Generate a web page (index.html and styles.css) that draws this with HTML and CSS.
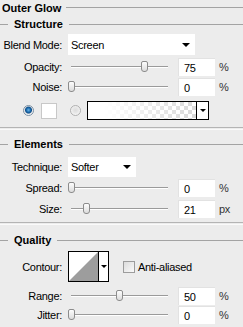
FILE: index.html
```html
<!DOCTYPE html>
<html lang="en">
  <head>
    <link rel="stylesheet" href="styles.css">
    <title>Outer Glow</title>
  </head>
  <body>
    <div class="panel">
      <div class="head head-top"><span class="head-text">Outer Glow</span><span class="head-line"></span></div>
      <div class="head head-structure"><span class="head-lead"></span><span class="head-text">Structure</span><span class="head-line"></span></div>

      <div class="row row-blend">
        <span class="label">Blend Mode:</span>
        <div class="select select-blend"><span>Screen</span><span class="arrow"></span></div>
      </div>

      <div class="row row-opacity">
        <span class="label">Opacity:</span>
        <div class="slider"><span class="track"></span><span class="thumb" style="left: 73px"></span></div>
        <div class="field">75</div>
        <span class="unit">%</span>
      </div>

      <div class="row row-noise">
        <span class="label">Noise:</span>
        <div class="slider"><span class="track"></span><span class="thumb" style="left: 0px"></span></div>
        <div class="field">0</div>
        <span class="unit">%</span>
      </div>

      <div class="row row-color">
        <span class="radio radio-on"></span>
        <span class="swatch"></span>
        <span class="radio radio-off"></span>
        <div class="gradient"><span class="gradient-fill"></span><span class="gradient-drop"><span class="arrow arrow-small"></span></span></div>
      </div>

      <div class="sep sep-one"></div>

      <div class="head head-elements"><span class="head-lead"></span><span class="head-text">Elements</span><span class="head-line"></span></div>

      <div class="row row-technique">
        <span class="label">Technique:</span>
        <div class="select select-technique"><span>Softer</span><span class="arrow"></span></div>
      </div>

      <div class="row row-spread">
        <span class="label">Spread:</span>
        <div class="slider"><span class="track"></span><span class="thumb" style="left: 0px"></span></div>
        <div class="field">0</div>
        <span class="unit">%</span>
      </div>

      <div class="row row-size">
        <span class="label">Size:</span>
        <div class="slider"><span class="track"></span><span class="thumb" style="left: 15px"></span></div>
        <div class="field">21</div>
        <span class="unit">px</span>
      </div>

      <div class="sep sep-two"></div>

      <div class="head head-quality"><span class="head-lead"></span><span class="head-text">Quality</span><span class="head-line"></span></div>

      <div class="row row-contour">
        <span class="label">Contour:</span>
        <div class="contour">
          <svg class="contour-curve" width="29" height="29" viewBox="0 0 29 29">
            <polygon points="0,29 29,0 29,29" fill="#9d9d9d" />
          </svg>
          <span class="contour-drop"><span class="arrow arrow-small"></span></span>
        </div>
        <span class="checkbox"></span>
        <span class="check-label">Anti-aliased</span>
      </div>

      <div class="row row-range">
        <span class="label">Range:</span>
        <div class="slider"><span class="track"></span><span class="thumb" style="left: 48px"></span></div>
        <div class="field">50</div>
        <span class="unit">%</span>
      </div>

      <div class="row row-jitter">
        <span class="label">Jitter:</span>
        <div class="slider"><span class="track"></span><span class="thumb" style="left: 0px"></span></div>
        <div class="field">0</div>
        <span class="unit">%</span>
      </div>
    </div>
  </body>
</html>
```

FILE: styles.css
```css
body {
  margin: 0;
  background-color: #ececec;
  font-family: "Liberation Sans", Arial, sans-serif;
  font-size: 11px;
  letter-spacing: -0.3px;
  color: #000;
}
.panel {
  width: 243px;
  height: 327px;
  display: flex;
  flex-direction: column;
}

/* section headings */
.head {
  display: flex;
  align-items: center;
  height: 14px;
  font-weight: bold;
  letter-spacing: 0;
}
.head-top {
  height: 15px;
  padding-left: 2px;
}
.head-lead {
  width: 8px;
  height: 1px;
  background-color: #a3a3a3;
  margin-right: 6px;
}
.head-line {
  flex: 1;
  height: 1px;
  background-color: #a3a3a3;
  margin-left: 6px;
}
.head-top .head-line {
  margin-left: 5px;
}
.head-structure {
  margin-top: 2px;
}
.head-elements {
  margin-top: 7px;
}
.head-quality {
  margin-top: 8px;
}
.sep {
  height: 1px;
  border-top: 1px solid #b4b4b4;
  border-bottom: 1px solid #fafafa;
}
.sep-one {
  margin-top: 7px;
}
.sep-two {
  margin-top: 4px;
}

/* rows */
.row {
  display: flex;
  align-items: center;
  height: 18px;
}
.label {
  width: 62px;
  text-align: right;
  margin-right: 6px;
  white-space: nowrap;
}
.row-blend {
  height: 21px;
  margin-top: 3px;
}
.row-opacity {
  margin-top: 3px;
}
.row-noise {
  margin-top: 2px;
}
.row-color {
  height: 19px;
  margin-top: 5px;
  padding-left: 23px;
}
.row-technique {
  height: 20px;
  margin-top: 6px;
}
.row-spread {
  margin-top: 2px;
}
.row-size {
  margin-top: 3px;
}
.row-contour {
  height: 31px;
  margin-top: 4px;
}
.row-range {
  margin-top: 5px;
}
.row-jitter {
  margin-top: 1px;
}

/* dropdowns */
.select {
  display: flex;
  align-items: center;
  justify-content: space-between;
  height: 100%;
  background-color: #fff;
  padding: 0 5px 0 3px;
  box-sizing: border-box;
}
.select-blend {
  width: 127px;
}
.select-technique {
  width: 68px;
}
.arrow {
  width: 0;
  height: 0;
  border-left: 4px solid transparent;
  border-right: 4px solid transparent;
  border-top: 4px solid #000;
}
.arrow-small {
  border-left-width: 3px;
  border-right-width: 3px;
  border-top-width: 3px;
}

/* sliders */
.slider {
  position: relative;
  width: 104px;
  height: 100%;
}
.track {
  position: absolute;
  left: 3px;
  right: 4px;
  top: 8px;
  height: 1px;
  background-color: #9a9a9a;
  border-bottom: 1px solid #fff;
}
.thumb {
  position: absolute;
  top: 3px;
  width: 5px;
  height: 9px;
  border: 1px solid #8c8c8c;
  border-radius: 2px 2px 3px 3px;
  background: linear-gradient(#fdfdfd, #dcdcdc);
}
.field {
  width: 37px;
  height: 100%;
  margin-left: 6px;
  box-sizing: border-box;
  background-color: #fff;
  border-top: 1px solid #e2e2e2;
  border-left: 1px solid #e2e2e2;
  padding: 3px 0 0 5px;
}
.unit {
  margin-left: 4px;
  color: #333;
}

/* color row */
.radio {
  width: 11px;
  height: 11px;
  border-radius: 50%;
  box-sizing: border-box;
}
.radio-on {
  border: 1px solid #7a8fa3;
  background: radial-gradient(circle at 50% 45%, #6db6e8 0, #1f6fb0 2px, #0d4f8c 3px, #e6e6e6 4px, #ffffff 5px);
}
.radio-off {
  margin-left: 13px;
  border: 1px solid #b0b0b0;
  background: radial-gradient(circle at 50% 45%, #dcdcdc 0, #e8e8e8 3px, #f7f7f7 5px);
}
.swatch {
  width: 16px;
  height: 16px;
  margin-left: 7px;
  box-sizing: border-box;
  background-color: #fff;
  border: 1px solid #c8c8c8;
}
.gradient {
  display: flex;
  width: 122px;
  height: 100%;
  margin-left: 6px;
  box-sizing: border-box;
  border: 1px solid #000;
  background-color: #fff;
}
.gradient-fill {
  flex: 1;
  background:
    linear-gradient(to right, #fff 15%, rgba(255, 255, 255, 0) 100%),
    repeating-conic-gradient(#d9d9d9 0 25%, #fff 0 50%) 0 0 / 8px 8px;
}
.gradient-drop {
  display: flex;
  align-items: center;
  justify-content: center;
  width: 11px;
  border-left: 1px solid #000;
  background-color: #fff;
}

/* contour */
.contour {
  display: flex;
  width: 41px;
  height: 100%;
  box-sizing: border-box;
  border: 1px solid #000;
  background-color: #fff;
}
.contour-curve {
  display: block;
  background-color: #fff;
}
.contour-drop {
  display: flex;
  align-items: center;
  justify-content: center;
  flex: 1;
  border-left: 1px solid #000;
}
.checkbox {
  width: 12px;
  height: 12px;
  margin-left: 14px;
  box-sizing: border-box;
  border: 1px solid #9c9c9c;
  background: linear-gradient(135deg, #dcdcdc, #fafafa);
}
.check-label {
  margin-left: 3px;
}
```
